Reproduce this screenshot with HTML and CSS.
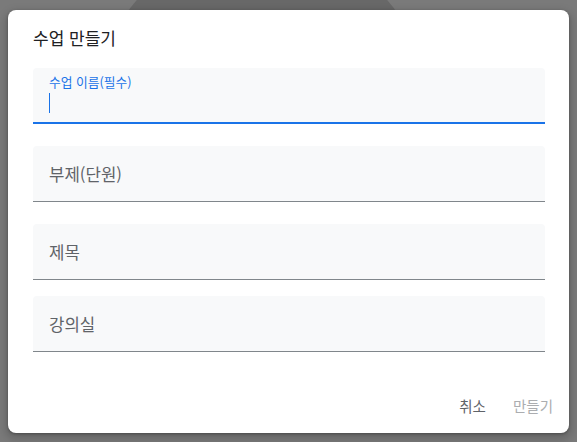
FILE: index.html
```html
<!DOCTYPE html>
<html lang="ko">
<head>
<meta charset="utf-8">
<title>수업 만들기</title>
<link rel="stylesheet" href="styles.css">
</head>
<body>
<div class="page-bg"><div class="bg-circle"></div></div>
<div class="overlay">
  <div class="dialog" role="dialog">
    <h1 class="title">수업 만들기</h1>
    <div class="fields">
      <div class="field field-active">
        <span class="float-label">수업 이름(필수)</span>
        <span class="caret"></span>
      </div>
      <div class="field field-gap"><span class="placeholder">부제(단원)</span></div>
      <div class="field field-gap"><span class="placeholder">제목</span></div>
      <div class="field field-gap-sm"><span class="placeholder">강의실</span></div>
    </div>
    <div class="actions">
      <button class="btn btn-cancel">취소</button>
      <button class="btn btn-create">만들기</button>
    </div>
  </div>
</div>
</body>
</html>
```

FILE: styles.css
```css
* { box-sizing: border-box; }
html, body {
  margin: 0;
  height: 442px;
  overflow: hidden;
}
body {
  background: #7a7a7a;
  font-family: "Noto Sans CJK KR", Roboto, sans-serif;
  position: relative;
}
.page-bg {
  position: absolute;
  inset: 0;
}
.bg-circle {
  position: absolute;
  left: 96px;
  top: -57px;
  width: 332px;
  height: 332px;
  border-radius: 50%;
  background: #686868;
}
.overlay {
  position: absolute;
  inset: 0;
  display: flex;
  justify-content: center;
  align-items: flex-start;
  padding-top: 10px;
}
.dialog {
  width: 561px;
  background: #fff;
  border-radius: 8px;
  box-shadow: 0 1px 3px rgba(0,0,0,0.3), 0 4px 8px 3px rgba(0,0,0,0.15);
  padding: 16px 8px 9px 25px;
  display: flex;
  flex-direction: column;
}
.title {
  margin: 0;
  font-size: 17px;
  line-height: 24px;
  font-weight: 400;
  color: #202124;
}
.fields {
  margin-top: 18px;
  margin-right: 16px;
  display: flex;
  flex-direction: column;
}
.field {
  height: 56px;
  background: #f8f9fa;
  border-radius: 4px 4px 0 0;
  border-bottom: 1px solid #80868b;
  padding: 0 16px;
  display: flex;
  align-items: center;
}
.field-gap { margin-top: 22px; }
.field-gap-sm { margin-top: 16px; }
.field-active {
  border-bottom: 2px solid #1a73e8;
  flex-direction: column;
  align-items: flex-start;
  justify-content: flex-start;
  padding-top: 6px;
}
.float-label {
  font-size: 12.75px;
  line-height: 16px;
  color: #1a73e8;
}
.caret {
  display: block;
  width: 1px;
  height: 20px;
  margin-top: 3px;
  background: #1a73e8;
}
.placeholder {
  font-size: 16.75px;
  line-height: 24px;
  color: #5f6368;
}
.actions {
  margin-top: 36px;
  display: flex;
  justify-content: flex-end;
  gap: 11px;
}
.btn {
  height: 36px;
  padding: 0 8px;
  border: 0;
  background: transparent;
  font-family: inherit;
  font-size: 14.5px;
  line-height: 36px;
  border-radius: 4px;
  cursor: pointer;
}
.btn-cancel { color: #5f6368; }
.btn-create { color: #abadb0; }
```
